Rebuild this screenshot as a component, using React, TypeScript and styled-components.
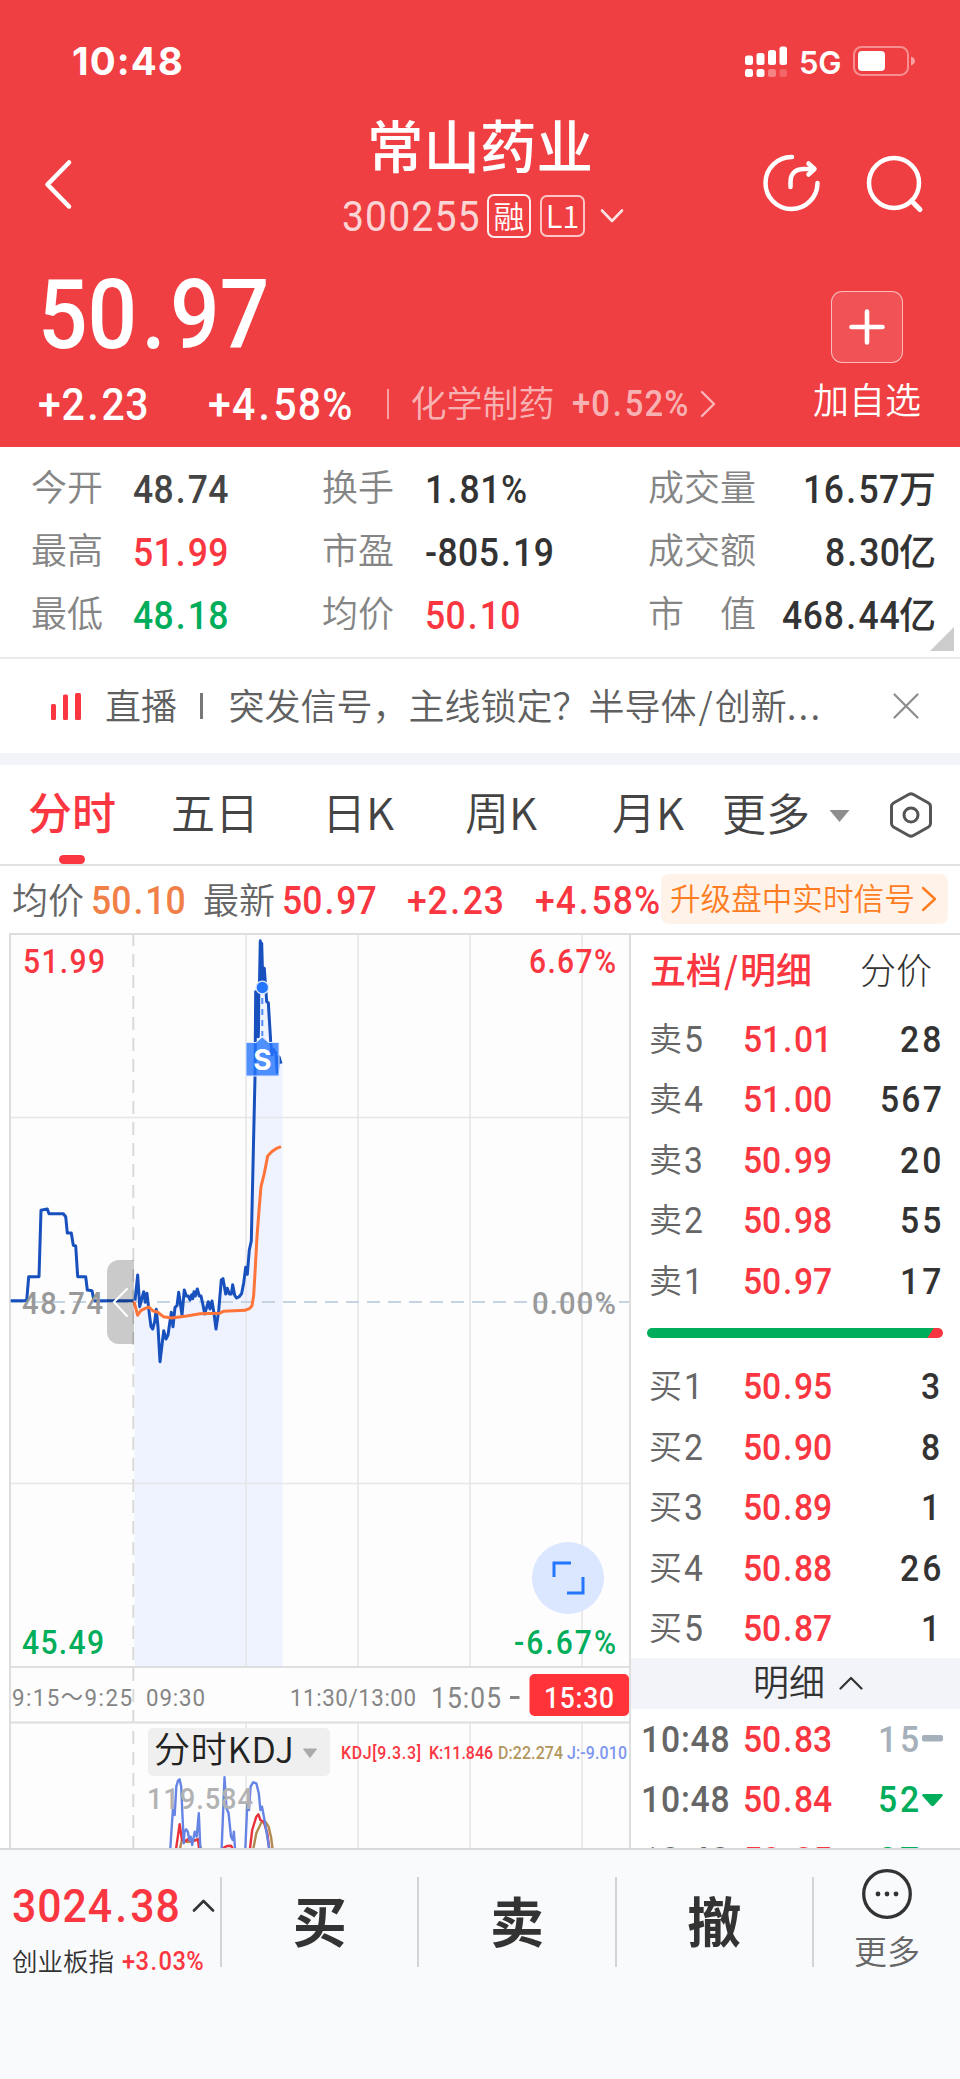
import React from "react";
import styled, { createGlobalStyle } from "styled-components";

const C = {
  brand: "#f03f42",
  red: "#fa3641",
  green: "#00ad5b",
  ink: "#333333",
  mid: "#666666",
  label: "#858585",
  line: "#dedede",
  band: "#f2f4f9",
  blue: "#1850bd",
  accent: "#2476ff",
};

const CJK = '"Noto Sans CJK SC", sans-serif';
const DIGITS = 'Roboto, "Noto Sans CJK SC", sans-serif';

const GlobalStyle = createGlobalStyle`
  * { box-sizing: border-box; }
  body { margin: 0; background: #fff; }
  svg { display: block; }
`;

const Page = styled.div`
  width: 960px;
  height: 2079px;
  overflow: hidden;
  background: #fff;
  font-family: ${CJK};
  color: ${C.ink};
  white-space: nowrap;
  display: flex;
  flex-direction: column;
`;

/* Condensed figures: glyphs are narrowed and the tracking opened up again,
   with some extra air around the decimal point. */
const CONDENSE = 0.91;
const DOT_AIR = 0.1;
const ADVANCE: Record<string, number> = { ".": 0.28, "+": 0.56, "-": 0.34, "%": 0.74, ":": 0.265 };

const Figures = styled.span<{ $size: number; $color?: string; $weight: number; $track: number; $trim: number }>`
  display: inline-block;
  font-family: ${DIGITS};
  font-size: ${(p) => p.$size}px;
  font-weight: ${(p) => p.$weight};
  letter-spacing: ${(p) => p.$track.toFixed(2)}px;
  margin-right: ${(p) => p.$trim.toFixed(2)}px;
  color: ${(p) => p.$color ?? "inherit"};
  line-height: 1;
  transform: scaleX(${CONDENSE});
  transform-origin: left center;
`;

const Point = styled.span`
  margin: 0 ${DOT_AIR / 2}em;
`;

type NumProps = { $size: number; $color?: string; $weight?: number; $ls?: number; children: string };

function Num({ $size, $color, $weight = 500, $ls = -1, children }: NumProps) {
  const chars = [...children];
  const n = chars.length;
  const dots = chars.filter((c) => c === ".").length;
  const natural = chars.reduce((sum, c) => sum + (ADVANCE[c] ?? 0.5664), dots * DOT_AIR) * $size;
  const target = natural - dots * DOT_AIR * $size + n * $ls;
  const track = n > 1 ? ((target - $ls) / CONDENSE - natural) / (n - 1) : 0;
  const trim = target - (natural + n * track);
  const parts = children.split(".");
  return (
    <Figures $size={$size} $color={$color} $weight={$weight} $track={track} $trim={trim}>
      {parts[0]}
      {parts.length > 1 && <Point>.</Point>}
      {parts[1]}
    </Figures>
  );
}

const Label = styled.span<{ $size?: number; $color?: string; $weight?: number }>`
  font-size: ${(p) => p.$size ?? 36}px;
  font-weight: ${(p) => p.$weight ?? 350};
  color: ${(p) => p.$color ?? "inherit"};
  line-height: 1;
  padding-bottom: 0.12em;
`;

const Space = styled.i<{ $w: number }>`
  flex: none;
  width: ${(p) => p.$w}px;
`;

/* ---------- header ---------- */

const Header = styled.header`
  height: 447px;
  flex: none;
  background: ${C.brand};
  color: #fff;
  display: flex;
  flex-direction: column;
`;

const StatusBar = styled.div`
  height: 110px;
  padding: 12px 44px 0 72px;
  display: flex;
  align-items: center;
  font-family: Inter, sans-serif;
`;

const Clock = styled.span`
  font-size: 38.5px;
  font-weight: 700;
  letter-spacing: 1.1px;
  line-height: 1;
  margin-right: auto;
`;

const Network = styled.span`
  font-size: 31px;
  font-weight: 600;
  letter-spacing: -0.4px;
  line-height: 1;
  margin: 2px 12px 0 6px;
`;

const TitleBar = styled.div`
  height: 140px;
  display: grid;
  grid-template-columns: 250px 1fr 250px;
`;

const BackSlot = styled.div`
  padding: 49px 0 0 42px;
`;

const TitleCol = styled.div`
  display: flex;
  flex-direction: column;
  align-items: center;
`;

const Title = styled.h1`
  margin: 5px 0 0;
  font-size: 56.5px;
  font-weight: 500;
  line-height: 56px;
`;

const CodeRow = styled.div`
  display: flex;
  align-items: center;
  height: 46px;
  margin-top: 22px;
  padding-left: 8px;
`;

const Tag = styled.span<{ $w: number; $h: number; $dim?: boolean }>`
  width: ${(p) => p.$w}px;
  height: ${(p) => p.$h}px;
  border: 2px solid rgba(255, 255, 255, ${(p) => (p.$dim ? 0.7 : 0.9)});
  border-radius: 7px;
  display: flex;
  align-items: center;
  justify-content: center;
  font-size: 31px;
  font-weight: 350;
  line-height: 1;
  margin-left: 9px;
  padding-bottom: 3px;
`;

const Actions = styled.div`
  display: flex;
  padding: 42px 0 0 50px;
  gap: 42px;
`;

const PriceBar = styled.div`
  flex: 1;
  display: flex;
  justify-content: space-between;
`;

const PriceCol = styled.div`
  padding: 17px 0 0 38px;
`;

const PriceLine = styled.div`
  height: 96px;
  display: flex;
`;

const ChangeRow = styled.div`
  display: flex;
  align-items: center;
  height: 44px;
  margin-top: 19px;
`;

const Separator = styled.i`
  width: 2px;
  height: 30px;
  background: rgba(255, 255, 255, 0.5);
  margin: 0 22px 0 35px;
`;

const Sector = styled.span`
  display: flex;
  align-items: center;
  color: rgba(255, 255, 255, 0.62);
`;

const SectorName = styled(Label)`
  padding-bottom: 0.16em;
`;

const AddCol = styled.div`
  padding-top: 41px;
  margin-right: 39px;
  display: flex;
  flex-direction: column;
  align-items: center;
`;

const AddButton = styled.div`
  width: 72px;
  height: 72px;
  border-radius: 11px;
  border: 1.5px solid rgba(255, 255, 255, 0.6);
  background: rgba(255, 255, 255, 0.1);
  display: flex;
  align-items: center;
  justify-content: center;
  margin-bottom: 17px;
`;

/* ---------- statistics ---------- */

const Stats = styled.section`
  height: 212px;
  flex: none;
  border-bottom: 2px solid #ebebeb;
  padding: 9px 24px 0 31px;
  display: grid;
  grid-template-columns: 103px 188px 104px 222px 1fr;
  grid-auto-rows: 63px;
  align-items: center;
  position: relative;
`;

const StatValue = styled.span<{ $color?: string; $right?: boolean }>`
  display: flex;
  align-items: center;
  justify-content: ${(p) => (p.$right ? "flex-end" : "flex-start")};
  color: ${(p) => p.$color ?? C.ink};
  padding-top: 5px;
  margin-left: -1px;
`;

const Unit = styled.span`
  font-size: 37px;
  font-weight: 500;
  line-height: 1;
  margin-top: -6px;
`;

const RightCell = styled.div`
  grid-column: 5;
  display: flex;
  align-items: center;
  justify-content: space-between;
`;

const Corner = styled.i`
  position: absolute;
  right: 6px;
  bottom: 6px;
  border: 12px solid transparent;
  border-right-color: #ccc;
  border-bottom-color: #ccc;
`;

/* ---------- notice ---------- */

const Notice = styled.section`
  height: 106px;
  flex: none;
  border-bottom: 12px solid ${C.band};
  padding: 0 41px 0 51px;
  display: flex;
  align-items: center;
  color: #606060;
`;

const NoticeBar = styled.i`
  width: 2.5px;
  height: 26px;
  background: #777;
  margin: 0 26px 0 23px;
`;

const Dots = styled.span`
  letter-spacing: 2.2px;
`;

const CloseSlot = styled.span`
  margin-left: auto;
`;

/* ---------- tabs ---------- */

const Tabs = styled.nav`
  height: 101px;
  flex: none;
  border-bottom: 2px solid #e2e2e2;
  display: grid;
  grid-template-columns: 171px 151px 143px 147px 110px 164px 1fr;
  color: #444;
`;

const Tab = styled.div<{ $active?: boolean; $pad?: number }>`
  height: 99px;
  padding: 0 0 2px ${(p) => p.$pad ?? 0}px;
  font-size: 44px;
  font-weight: ${(p) => (p.$active ? 500 : 350)};
  line-height: 92px;
  color: ${(p) => (p.$active ? C.red : "inherit")};
  position: relative;

  &::after {
    content: "";
    display: ${(p) => (p.$active ? "block" : "none")};
    position: absolute;
    left: 59px;
    bottom: 0;
    width: 26px;
    height: 9px;
    border-radius: 4.5px;
    background: ${C.red};
  }
`;

const MoreTab = styled(Tab)`
  display: flex;
  align-items: center;
  gap: 18px;
  padding: 2px 0 0;
  line-height: 1;
`;

const MoreText = styled.span`
  padding-bottom: 8px;
`;

const SettingsSlot = styled.div`
  padding-top: 24px;
`;

/* ---------- quote line ---------- */

const QuoteLine = styled.div`
  height: 67px;
  flex: none;
  display: flex;
  align-items: center;
  padding: 4px 0 0 12px;
`;

const QuoteItem = styled.span<{ $gap: number }>`
  display: flex;
  align-items: center;
  width: ${(p) => p.$gap}px;
  flex: none;
`;

const QuoteLabel = styled(Label)`
  padding-bottom: 0.19em;
`;

const Upgrade = styled.span`
  width: 287px;
  height: 50px;
  margin-top: -5px;
  border-radius: 8px;
  background: #fff3e9;
  color: #ff7d22;
  display: flex;
  align-items: center;
  padding-left: 9px;
`;

/* ---------- main area ---------- */

const Main = styled.main`
  height: 915px;
  flex: none;
  display: flex;
  overflow: hidden;
`;

const ChartPane = styled.div`
  width: 630px;
  flex: none;
`;

const BookPane = styled.aside`
  flex: 1;
  border-left: 2px solid ${C.line};
  border-top: 2px solid ${C.line};
  margin-left: -1px;
`;

const BookTabs = styled.div`
  height: 74px;
  padding: 0 28px 4px 19px;
  display: flex;
  align-items: center;
  justify-content: space-between;
`;

const Slash = styled.span`
  margin: 0 2px;
`;

const BookRow = styled.div`
  height: 60.5px;
  display: grid;
  grid-template-columns: 94px 100px 1fr;
  padding: 0 19px 0 18px;
  align-items: center;
`;

const Level = styled.span`
  display: flex;
  align-items: center;
  color: ${C.mid};
  gap: 2px;
`;

const Qty = styled.span`
  justify-self: end;
  display: flex;
  align-items: center;
`;

const DepthBar = styled.div`
  height: 10px;
  margin: 16px 17px 19px 16px;
  border-radius: 5px;
  background: linear-gradient(123deg, ${C.green} 94.7%, ${C.red} 94.9%);
`;

const DetailHead = styled.div`
  height: 51px;
  margin-top: -1px;
  background: ${C.band};
  display: flex;
  align-items: center;
  padding: 0 0 2px 122px;
  gap: 14px;
`;

const TradeRow = styled.div`
  height: 60.5px;
  display: grid;
  grid-template-columns: 102px 100px 1fr;
  padding: 0 17px 0 10px;
  align-items: center;
`;

const TradeMark = styled.span`
  width: 21px;
  margin-left: 4px;
  display: flex;
`;

/* ---------- bottom bar ---------- */

const Bottom = styled.footer`
  flex: 1;
  border-top: 2px solid #dadadc;
  background: #f9fafc;
  display: flex;
  padding-top: 27px;
`;

const IndexCol = styled.div`
  width: 220px;
  padding: 5px 0 0 12px;
`;

const IndexTop = styled.div`
  display: flex;
  align-items: center;
  height: 46px;
  gap: 13px;
`;

const IndexSub = styled.div`
  display: flex;
  align-items: center;
  height: 30px;
  margin-top: 18px;
  gap: 8px;
`;

const TradeButton = styled.div`
  width: 197.3px;
  height: 90px;
  border-left: 2px solid #d4d4d8;
  text-align: center;
  font-size: 54px;
  font-weight: 700;
  line-height: 86px;
`;

const More = styled.div`
  flex: 1;
  height: 90px;
  border-left: 2px solid #d4d4d8;
  display: flex;
  flex-direction: column;
  align-items: center;
`;

const MoreInner = styled.div`
  margin-top: -9px;
  display: flex;
  flex-direction: column;
  align-items: center;
  gap: 14px;
`;

/* ---------- icons ---------- */

function Stroke({ w, h, d, c = "#fff", s = 4 }: { w: number; h: number; d: string; c?: string; s?: number }) {
  return (
    <svg width={w} height={h} viewBox={`0 0 ${w} ${h}`} fill="none" stroke={c} strokeWidth={s} strokeLinecap="round" strokeLinejoin="round">
      <path d={d} />
    </svg>
  );
}

const Signal = () => (
  <svg width="50" height="32" fill="#fff">
    <rect x="2" y="10.5" width="8" height="9.5" rx="2.5" />
    <rect x="13.5" y="8" width="8" height="12" rx="2.5" />
    <rect x="25" y="5" width="8" height="15" rx="2.5" />
    <rect x="36.5" y="1.5" width="7.5" height="18.5" rx="2.5" />
    <rect x="2" y="24" width="8" height="8" rx="2.5" />
    <rect x="13.5" y="24" width="8" height="8" rx="2.5" />
    <rect x="25" y="24" width="8" height="8" rx="2.5" opacity=".35" />
    <rect x="36.5" y="24" width="7.5" height="8" rx="2.5" opacity=".2" />
  </svg>
);

const Battery = () => (
  <svg width="63" height="30">
    <rect x="1" y="1" width="54" height="28" rx="7.5" fill="none" stroke="#fff" strokeOpacity=".42" strokeWidth="2" />
    <rect x="5" y="5" width="27" height="20" rx="4" fill="#fff" />
    <path d="M58 10.5c3 1 4 3 4 4.5s-1 3.500-4 4.500z" fill="#fff" fillOpacity=".5" />
  </svg>
);

const Share = () => (
  <svg width="60" height="64" fill="none" stroke="#fff" strokeWidth="4.5" strokeLinecap="round" strokeLinejoin="round">
    <path d="M32 5A26 26 0 1 0 57.500 31" />
    <path d="M30.500 35V30C30.500 20 37 17 44 17H53" />
    <path d="M48.500 11.500L54.500 17L48.500 22.500" />
  </svg>
);

const Search = () => (
  <svg width="62" height="64" fill="none" stroke="#fff" strokeWidth="4.5" strokeLinecap="round">
    <circle cx="32" cy="31" r="25" />
    <path d="M49.500 49L58 57.500" strokeWidth="5" />
  </svg>
);

const Hexagon = () => (
  <svg width="50" height="52" fill="none" stroke="#555" strokeWidth="3">
    <path d="M27 5.300L42.500 14Q44.500 15.200 44.500 17.500V34.500Q44.500 36.800 42.500 38L27 46.700Q25 47.700 23 46.700L7.500 38Q5.500 36.800 5.500 34.500V17.500Q5.500 15.200 7.500 14L23 5.300Q25 4.300 27 5.300z" />
    <circle cx="25" cy="26" r="7" />
  </svg>
);

/* ---------- intraday chart ---------- */

const CHART_TOP = 933;
const abs = (pts: number[][], ox: number, oy: number, sx: number, sy: number) =>
  pts.map(([x, y]) => `${(ox + x / sx).toFixed(1)},${(oy + y / sy).toFixed(1)}`).join(" ");

const auction = abs(
  [[32, 482], [80, 482], [86, 410], [117, 410], [123, 211], [142, 207], [147, 221], [190, 221], [197, 230], [202, 279], [214, 279], [220, 316], [227, 318], [233, 410], [257, 410], [262, 450], [276, 452], [282, 482], [400, 482]],
  0, 1140, 3, 3
);
const session = abs(
  [[405, 482], [413, 405], [419, 500], [431, 455], [436, 487], [441, 460], [448, 520], [453, 560], [458, 567], [464, 545], [469, 508], [474, 560], [480, 665], [491, 572], [498, 597], [504, 585], [514, 517], [519, 560], [525, 502], [531, 497], [536, 457], [546, 525], [553, 450], [559, 468], [565, 468], [570, 480], [575, 464], [578, 476], [582, 455], [586, 468], [592, 447], [598, 468], [603, 468], [609, 495], [614, 522], [625, 485], [630, 507], [636, 483], [642, 520], [648, 567], [656, 512], [664, 420], [669, 416], [677, 462], [682, 445], [688, 462], [694, 462], [698, 434], [704, 466], [710, 474], [718, 470], [725, 460], [731, 428], [737, 382], [742, 403], [748, 330], [754, 303], [765, -190], [767, -445], [770, -310], [772, -445], [775, -310], [778, -445], [781, -598], [783, -480], [785, -590], [788, -480], [793, -515], [797, -455], [800, -415], [805, -412], [812, -295], [816, -255], [820, -272], [827, -262], [832, -202], [837, -250], [843, -229]],
  0, 1140, 3, 3
);
const average = abs(
  [[402, 485], [413, 526], [422, 512], [436, 505], [447, 501], [458, 512], [474, 517], [490, 530], [515, 534], [560, 528], [600, 521], [658, 520], [670, 514], [735, 511], [748, 506], [756, 497], [761, 465], [765, 400], [771, 290], [778, 200], [783, 140], [793, 100], [803, 48], [815, 35], [828, 26], [843, 20]],
  0, 1140, 3, 3
);
const kdjJ = [
  [[417, 630], [424, 500], [428, 525], [432, 440], [436, 422], [440, 418], [444, 440], [450, 610], [452, 575], [456, 568], [460, 575], [464, 600], [467, 590], [471, 615], [477, 575], [482, 590], [487, 520], [491, 630]],
  [[543, 630], [550, 412], [555, 505], [560, 520], [566, 590], [570, 600], [573, 575], [576, 630]],
  [[601, 630], [606, 490], [610, 510], [614, 440], [620, 427], [628, 430], [634, 460], [638, 510], [642, 500], [648, 540], [655, 590], [660, 630]],
];
const kdjK = [
  [[431, 630], [440, 553], [446, 600], [452, 605], [460, 598], [470, 605], [485, 598], [488, 630]],
  [[546, 625], [556, 618], [566, 617], [572, 630]],
  [[612, 630], [618, 570], [628, 530], [633, 523], [638, 540], [646, 545], [655, 580], [660, 630]],
];
const kdjD = [
  [[440, 630], [446, 600], [460, 606], [485, 598], [494, 630]],
  [[620, 630], [628, 580], [640, 548], [650, 545], [658, 560], [664, 590], [668, 630]],
];

type TxtProps = { x: number; y: number; w: number; s: number; c: string; wt?: number; children: string };
const ChartText = styled.text`
  font-family: ${DIGITS};
`;
const Txt = ({ x, y, w, s, c, wt = 500, children }: TxtProps) => (
  <ChartText transform={`translate(${x} ${y}) scale(${CONDENSE} 1)`} textLength={w / CONDENSE} fontSize={s} fill={c} fontWeight={wt}>
    {children}
  </ChartText>
);

const Chart = () => (
  <svg width="632" height="915" viewBox={`0 ${CHART_TOP} 632 915`}>
    <rect x="10" y="934" width="620" height="914" fill="#fdfdfe" />
    <polygon points={`134.500,1667 134.500,1302 ${session} 282.500,1060 282.500,1667`} fill="#eef3ff" />
    <g stroke="#e6e6e6" strokeWidth="1.6">
      {[246, 358, 470, 582].map((x) => (
        <path key={x} d={`M${x} 934V1667M${x} 1723V1848`} />
      ))}
      <path d="M10 1117.500H630M10 1483.500H630" />
    </g>
    <path d="M133.300 933V1848" stroke="#dadada" strokeWidth="2" strokeDasharray="13 8" />
    <path d="M10 1302H630" stroke="#c6d4e1" strokeWidth="2" strokeDasharray="13 8" />
    <g stroke={C.line} strokeWidth="2" fill="none">
      <path d="M10 1848V934H630M10 1667H630M10 1722.500H630M630 933V1848" />
    </g>
    <g fill="none" strokeWidth="3" strokeLinejoin="round">
      <polyline points={auction} stroke={C.blue} />
      <polyline points={session} stroke={C.blue} />
      <polyline points={average} stroke="#ff7438" />
    </g>

    <Txt x={23} y={972.500} w={82} s={33} c={C.red}>51.99</Txt>
    <Txt x={529} y={972.500} w={87} s={33} c={C.red}>6.67%</Txt>
    <Txt x={22} y={1313.500} w={81} s={32} c="#999">48.74</Txt>
    <Txt x={532} y={1313.500} w={84} s={32} c="#999">0.00%</Txt>
    <Txt x={22} y={1653.500} w={82} s={33} c={C.green}>45.49</Txt>
    <Txt x={514} y={1653.500} w={102} s={33} c={C.green}>-6.67%</Txt>

    <path d="M134 1260H119a12 12 0 0 0-12 12V1332a12 12 0 0 0 12 12H134z" fill="#000" fillOpacity=".2" />
    <path d="M127 1289L114 1302L127 1316" fill="none" stroke="#fff" strokeWidth="2" strokeLinecap="round" />

    <path d="M262.300 993V1036" stroke="#eef3ff" strokeWidth="4" />
    <path d="M262.300 998V1036" stroke="#4d8dff" strokeWidth="2" strokeDasharray="6 5" />
    <circle cx="262.300" cy="987.500" r="6.300" fill={C.accent} stroke="#dfe9ff" strokeWidth="1.300" />
    <path d="M246 1042.500H256L262.300 1037L268.500 1042.500H279V1076H246z" fill={C.accent} fillOpacity=".8" stroke="#dfe9ff" strokeWidth="1" />
    <text x="262.500" y="1069.500" textAnchor="middle" fontFamily="Inter, sans-serif" fontWeight="700" fontSize="28" fill="#fff">S</text>

    <circle cx="568" cy="1578" r="36" fill="#dbe6ff" />
    <path d="M554 1577V1563H571M567 1593H583V1577" fill="none" stroke={C.accent} strokeWidth="3" />

    <Txt x={12} y={1705.500} w={120} s={24.500} c="#858585" wt={400}>9:15～9:25</Txt>
    <Txt x={146} y={1705.500} w={59} s={24.500} c="#858585" wt={400}>09:30</Txt>
    <Txt x={290} y={1705.500} w={126} s={24.500} c="#858585" wt={400}>11:30/13:00</Txt>
    <Txt x={431} y={1707.500} w={70} s={29} c="#858585" wt={400}>15:05</Txt>
    <path d="M510 1697.500H519.500" stroke="#858585" strokeWidth="3" />
    <rect x="529.500" y="1674" width="99.500" height="42" rx="5" fill="#ff3338" />
    <Txt x={544} y={1707.500} w={70} s={29} c="#fff">15:30</Txt>

    <g fill="none" strokeWidth="2.400" strokeLinejoin="round">
      {kdjD.map((p, i) => <polyline key={i} points={abs(p, 0, 1640, 2.45, 3)} stroke="#b08a50" />)}
      {kdjK.map((p, i) => <polyline key={i} points={abs(p, 0, 1640, 2.45, 3)} stroke="#e8313a" />)}
      {kdjJ.map((p, i) => <polyline key={i} points={abs(p, 0, 1640, 2.45, 3)} stroke="#6584e4" />)}
    </g>
    <rect x="148" y="1728" width="182" height="48" rx="5" fill="#efefef" />
    <text x="154" y="1763" textLength="140" fontSize="36" fontWeight="350" fontFamily={CJK} fill="#222">分时KDJ</text>
    <path d="M303.500 1749H316.500L310 1757.500z" fill="#aaa" stroke="#aaa" strokeWidth="1" strokeLinejoin="round" />
    <Txt x={341} y={1759} w={80} s={17.500} c={C.red}>KDJ[9.3.3]</Txt>
    <Txt x={429} y={1759} w={64} s={17.500} c={C.red}>K:11.846</Txt>
    <Txt x={498} y={1759} w={65} s={17.500} c="#b3975f">D:22.274</Txt>
    <Txt x={567} y={1759} w={60} s={17.500} c="#7d97ee">J:-9.010</Txt>
    <Txt x={147} y={1808.500} w={106} s={30} c="#b2b2b2">119.584</Txt>
  </svg>
);

/* ---------- data ---------- */

const stats: [string, string, string | undefined, string, string, string | undefined, string, string, string][] = [
  ["今开", "48.74", "#444", "换手", "1.81%", undefined, "成交量", "16.57", "万"],
  ["最高", "51.99", C.red, "市盈", "-805.19", undefined, "成交额", "8.30", "亿"],
  ["最低", "48.18", C.green, "均价", "50.10", C.red, "市　值", "468.44", "亿"],
];
const asks = [["5", "51.01", "28"], ["4", "51.00", "567"], ["3", "50.99", "20"], ["2", "50.98", "55"], ["1", "50.97", "17"]];
const bids = [["1", "50.95", "3"], ["2", "50.90", "8"], ["3", "50.89", "1"], ["4", "50.88", "26"], ["5", "50.87", "1"]];
const trades = [
  { price: "50.83", qty: "15", color: "#a5b0ba", flat: true },
  { price: "50.84", qty: "52", color: C.green, flat: false },
  { price: "50.85", qty: "27", color: C.green, flat: false },
];

const Book = ({ side, rows }: { side: string; rows: string[][] }) => (
  <>
    {rows.map(([n, price, qty]) => (
      <BookRow key={n}>
        <Level>
          <Label $size={33}>{side}</Label>
          <Num $size={37} $weight={400} $ls={0}>{n}</Num>
        </Level>
        <Num $size={37} $color={C.red} $ls={-1.3}>{price}</Num>
        <Qty><Num $size={37} $ls={-0.6}>{qty}</Num></Qty>
      </BookRow>
    ))}
  </>
);

export default function App() {
  return (
    <Page>
      <GlobalStyle />
      <Header>
        <StatusBar>
          <Clock>10:48</Clock>
          <Signal />
          <Network>5G</Network>
          <Battery />
        </StatusBar>
        <TitleBar>
          <BackSlot><Stroke w={32} h={52} d="M27 3.500L5.500 25.500L27 47.500" s={4.6} /></BackSlot>
          <TitleCol>
            <Title>常山药业</Title>
            <CodeRow>
              <Num $size={43} $weight={400} $ls={-1.5} $color="rgba(255,255,255,.8)">300255</Num>
              <Tag $w={44} $h={44}>融</Tag>
              <Tag $w={45} $h={42} $dim>L1</Tag>
              <Space $w={13} />
              <Stroke w={28} h={18} d="M4 3.500L14 14L24 3.500" s={2.6} c="rgba(255,255,255,.85)" />
            </CodeRow>
          </TitleCol>
          <Actions><Share /><Search /></Actions>
        </TitleBar>
        <PriceBar>
          <PriceCol>
            <PriceLine><Num $size={96} $ls={-3.4}>50.97</Num></PriceLine>
            <ChangeRow>
              <Num $size={45} $ls={-0.9}>+2.23</Num>
              <Space $w={60} />
              <Num $size={45} $ls={-0.6}>+4.58%</Num>
              <Separator />
              <Sector>
                <SectorName>化学制药</SectorName>
                <Space $w={17} />
                <Num $size={36} $ls={-0.3}>+0.52%</Num>
                <Space $w={9} />
                <Stroke w={20} h={32} d="M5 4L17 16L5 28" s={2.4} c="rgba(255,255,255,.62)" />
              </Sector>
            </ChangeRow>
          </PriceCol>
          <AddCol>
            <AddButton><Stroke w={40} h={40} d="M20 4.500V35.500M4.500 20H35.500" s={4.6} /></AddButton>
            <Label>加自选</Label>
          </AddCol>
        </PriceBar>
      </Header>

      <Stats>
        {stats.map(([l1, v1, c1, l2, v2, c2, l3, v3, unit]) => (
          <React.Fragment key={l1}>
            <Label $color={C.label}>{l1}</Label>
            <StatValue $color={c1}><Num $size={39}>{v1}</Num></StatValue>
            <Label $color={C.label}>{l2}</Label>
            <StatValue $color={c2}><Num $size={39}>{v2}</Num></StatValue>
            <RightCell>
              <Label $color={C.label}>{l3}</Label>
              <StatValue $right>
                <Num $size={39} $ls={-0.8}>{v3}</Num>
                <Unit>{unit}</Unit>
              </StatValue>
            </RightCell>
          </React.Fragment>
        ))}
        <Corner />
      </Stats>

      <Notice>
        <svg width="31" height="28" fill={C.red}>
          <rect x="0" y="12" width="5" height="16" rx="1.5" />
          <rect x="12" y="2.500" width="5" height="25.500" rx="1.5" />
          <rect x="24" y="1" width="6" height="27" rx="1.5" />
        </svg>
        <Space $w={23} />
        <Label>直播</Label>
        <NoticeBar />
        <Label>突发信号，主线锁定？半导体<Slash>/</Slash>创新<Dots>...</Dots></Label>
        <CloseSlot>
          <Stroke w={26} h={26} d="M1.500 1.500L24.500 24.500M24.500 1.500L1.500 24.500" s={2.2} c="#8c8c8c" />
        </CloseSlot>
      </Notice>

      <Tabs>
        <Tab $active $pad={28}>分时</Tab>
        <Tab>五日</Tab>
        <Tab>日K</Tab>
        <Tab>周K</Tab>
        <Tab>月K</Tab>
        <MoreTab>
          <MoreText>更多</MoreText>
          <svg width="23" height="14" fill="#8e8e8e"><path d="M1.500 1H21.500L11.500 13z" /></svg>
        </MoreTab>
        <SettingsSlot><Hexagon /></SettingsSlot>
      </Tabs>

      <QuoteLine>
        <QuoteItem $gap={191}>
          <QuoteLabel $color={C.mid}>均价</QuoteLabel>
          <Space $w={7} />
          <Num $size={39} $color="#f08047" $ls={-1.2}>50.10</Num>
        </QuoteItem>
        <QuoteItem $gap={204}>
          <QuoteLabel $color={C.mid}>最新</QuoteLabel>
          <Space $w={7} />
          <Num $size={39} $color={C.red} $ls={-1.2}>50.97</Num>
        </QuoteItem>
        <QuoteItem $gap={128}><Num $size={39} $color={C.red} $ls={-0.5}>+2.23</Num></QuoteItem>
        <QuoteItem $gap={126}><Num $size={39} $color={C.red} $ls={-0.5}>+4.58%</Num></QuoteItem>
        <Upgrade>
          <Label $size={30.6}>升级盘中实时信号</Label>
          <Space $w={4} />
          <Stroke w={20} h={30} d="M4 4L16 15L4 26" s={2.4} c="#ff7d22" />
        </Upgrade>
      </QuoteLine>

      <Main>
        <ChartPane><Chart /></ChartPane>
        <BookPane>
          <BookTabs>
            <Label $weight={500} $color={C.red}>五档<Slash>/</Slash>明细</Label>
            <Label $weight={300}>分价</Label>
          </BookTabs>
          <Book side="卖" rows={asks} />
          <DepthBar />
          <Book side="买" rows={bids} />
          <DetailHead>
            <Label>明细</Label>
            <Stroke w={24} h={14} d="M1.500 12.500L12 2L22.500 12.500" s={2.2} c="#333" />
          </DetailHead>
          {trades.map((t) => (
            <TradeRow key={t.price}>
              <Num $size={37} $color={C.mid} $ls={-1.3}>10:48</Num>
              <Num $size={37} $color={C.red} $ls={-1.3}>{t.price}</Num>
              <Qty>
                <Num $size={37} $color={t.color}>{t.qty}</Num>
                <TradeMark>
                  {t.flat ? (
                    <svg width="21" height="8" fill={t.color}><rect y="0" width="21" height="6.500" rx="2" /></svg>
                  ) : (
                    <svg width="21" height="12" fill={t.color}><path d="M1 0H20L21 1.500L12 11.500Q10.500 12.500 9 11.500L0 1.500z" /></svg>
                  )}
                </TradeMark>
              </Qty>
            </TradeRow>
          ))}
        </BookPane>
      </Main>

      <Bottom>
        <IndexCol>
          <IndexTop>
            <Num $size={47} $color={C.red} $ls={-0.9}>3024.38</Num>
            <Stroke w={23} h={13} d="M2 11.500L11.500 2L21 11.500" s={2.6} c="#333" />
          </IndexTop>
          <IndexSub>
            <Label $size={25.5}>创业板指</Label>
            <Num $size={26} $color={C.red} $ls={-0.7}>+3.03%</Num>
          </IndexSub>
        </IndexCol>
        <TradeButton>买</TradeButton>
        <TradeButton>卖</TradeButton>
        <TradeButton>撤</TradeButton>
        <More>
          <MoreInner>
            <svg width="52" height="52">
              <circle cx="26" cy="26" r="23.300" fill="none" stroke="#333" strokeWidth="3.300" />
              {[17, 26, 35].map((x) => <circle key={x} cx={x} cy="26" r="2.400" fill="#333" />)}
            </svg>
            <Label $size={33} $color={C.mid}>更多</Label>
          </MoreInner>
        </More>
      </Bottom>
    </Page>
  );
}
